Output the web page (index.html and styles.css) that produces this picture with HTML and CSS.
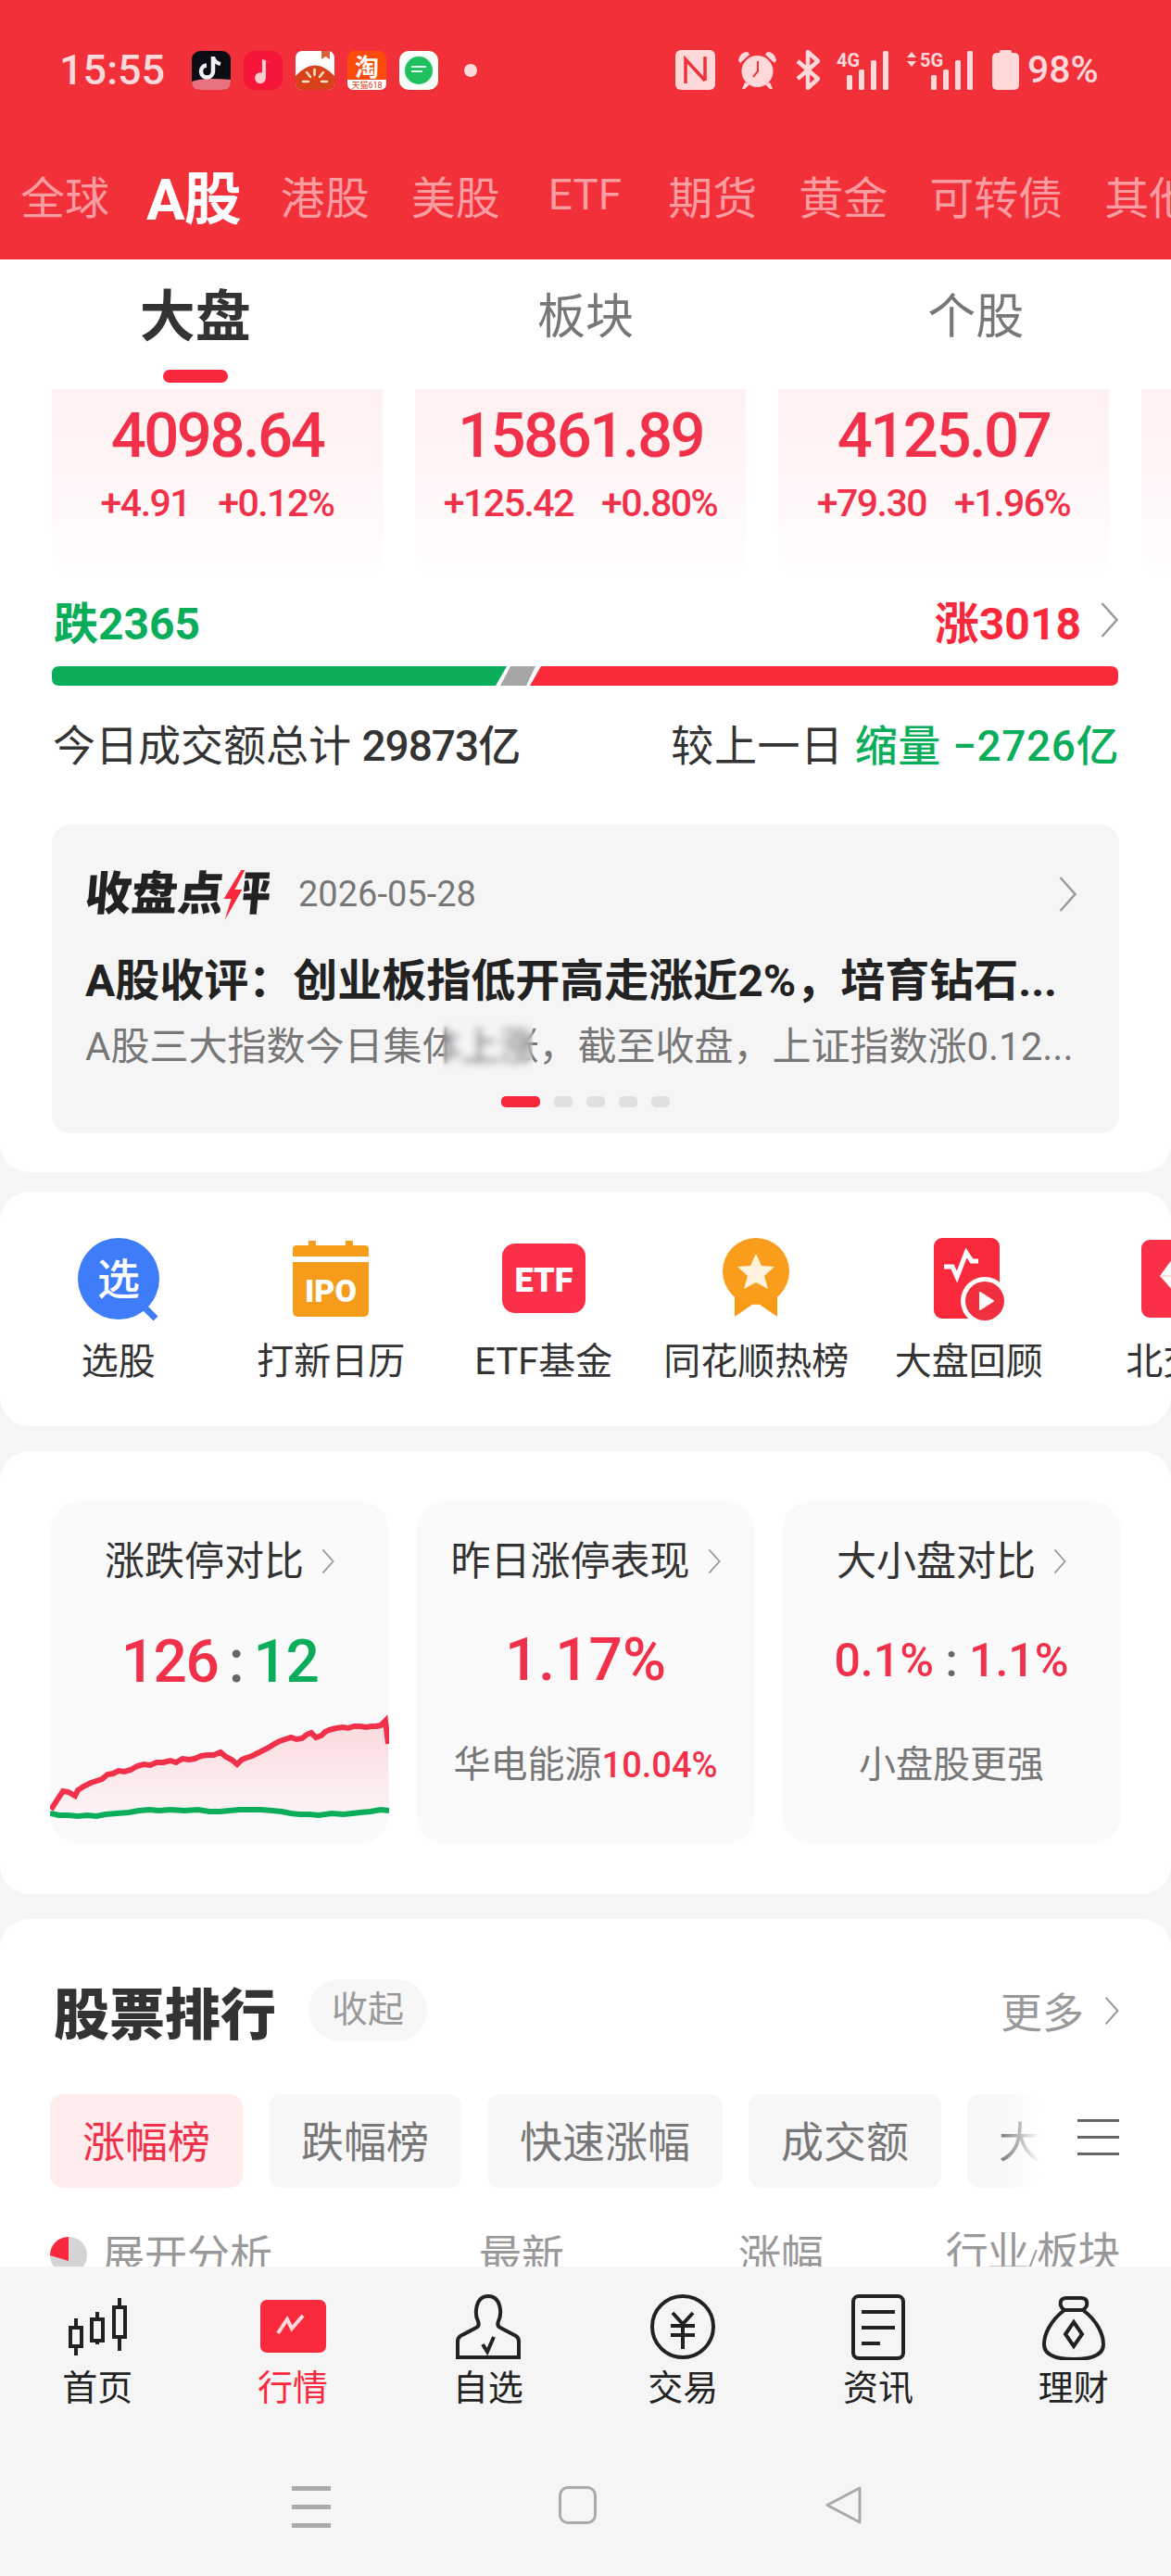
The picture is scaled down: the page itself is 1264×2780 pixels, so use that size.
FILE: index.html
```html
<!DOCTYPE html>
<html>
<head>
	<meta charset="utf-8">
	<title>行情</title>
	<link rel="stylesheet" href="styles.css">
</head>
<body>
	<header class="header">
		<div class="status">
			<span class="time">15:55</span>
			<div class="apps">
				<svg class="app" viewBox="0 0 42 42"><rect width="42" height="42" rx="9" fill="#0c0c14"/><path d="M0 33 Q12 28 42 31 V33 Q42 42 33 42 H9 Q0 42 0 33Z" fill="#e8727f"/><path d="M23 6 V22 A6.500 6.500 0 1 1 16 15.500" fill="none" stroke="#f0f2f4" stroke-width="4.500"/><path d="M23 7 Q25 13 31 14" fill="none" stroke="#f0f2f4" stroke-width="4"/></svg>
				<svg class="app" viewBox="0 0 42 42"><rect width="42" height="42" rx="11" fill="#f5163a"/><path d="M24 10 V29 A6 6 0 1 1 20 23.500 V9 Q26 10 29 14" fill="#ffc9cf"/></svg>
				<svg class="app" viewBox="0 0 42 42"><rect width="42" height="42" rx="7" fill="#fff"/><path d="M0 27 Q21 4 42 27 V35 Q42 42 35 42 H7 Q0 42 0 35Z" fill="#d9411c"/><path d="M28 0 H37 V9 L32.500 6 L28 9Z" fill="#d9623c"/><path d="M20.500 20 V26 M12 23 L16 28 M30 23 L26 28 M8 33 H14 M28 33 H34" stroke="#ffe3c4" stroke-width="2.500" stroke-linecap="round"/></svg>
				<svg class="app" viewBox="0 0 42 42"><rect width="42" height="42" rx="8" fill="#fb4b0a"/><path d="M0 31 H42 V35 Q42 42 35 42 H7 Q0 42 0 35Z" fill="#fff"/><text class="app-big" x="21" y="27">淘</text><text class="app-small" x="21" y="40">天猫618</text></svg>
				<svg class="app" viewBox="0 0 42 42"><rect width="42" height="42" rx="10" fill="#f6fffa"/><circle cx="21" cy="21" r="15" fill="#1fc15f"/><path d="M13 17 H29 M13 22 H25" stroke="#e5fff0" stroke-width="2"/></svg>
			</div>
			<span class="dot"></span>
			<div class="sys">
				<svg class="sys-nfc" viewBox="0 0 43 43"><rect width="43" height="43" rx="6"/><path d="M11 36 V10 L32 33 M32 7 V33" fill="none" stroke="#f1303a" stroke-width="3.500"/></svg>
				<svg class="sys-alarm" viewBox="0 0 45 43"><circle cx="22.500" cy="23" r="17"/><path d="M2 11 Q4 2 12 2 L14 5 L4 14Z M43 11 Q41 2 33 2 L31 5 L41 14Z M9 35 L6 42 H9 L14 37Z M36 35 L39 42 H36 L31 37Z"/><path d="M23 12 V23 L18 29" fill="none" stroke="#f1303a" stroke-width="2"/></svg>
				<svg class="sys-bt" viewBox="0 0 26 43"><path d="M2 12 L24 31 L13 41 V2 L24 12 L2 31" fill="none" stroke="#ffd9da" stroke-width="4.500" stroke-linejoin="round"/></svg>
				<svg class="sys-4g" viewBox="0 0 57 43"><text x="0" y="18">4G</text><rect x="11" y="27" width="6" height="16" rx="1.500"/><rect x="24" y="21" width="6" height="22" rx="1.500"/><rect x="37" y="11" width="6" height="32" rx="1.500"/><rect x="50" y="1" width="6" height="42" rx="1.500"/></svg>
				<svg class="sys-5g" viewBox="0 0 72 43"><path d="M1 8 L6 2 L11 8Z M1 12 L6 18 L11 12Z"/><text x="15" y="18">5G</text><rect x="27" y="27" width="6" height="16" rx="1.500"/><rect x="40" y="21" width="6" height="22" rx="1.500"/><rect x="53" y="11" width="6" height="32" rx="1.500"/><rect x="66" y="1" width="6" height="42" rx="1.500"/></svg>
				<svg class="sys-battery" viewBox="0 0 29 43"><rect x="0" y="3" width="29" height="40" rx="5"/><rect x="8" y="0" width="13" height="5" rx="2"/></svg>
				<span class="battery-text">98%</span>
			</div>
		</div>
		<nav class="market-tabs">
			<span>全球</span>
			<span class="market-on">A股</span>
			<span>港股</span>
			<span>美股</span>
			<span class="market-etf">ETF</span>
			<span>期货</span>
			<span>黄金</span>
			<span>可转债</span>
			<span>其他</span>
		</nav>
	</header>

	<nav class="sub-tabs">
		<div class="sub-tab sub-on">大盘<i class="sub-line"></i></div>
		<div class="sub-tab">板块</div>
		<div class="sub-tab">个股</div>
	</nav>

	<section class="panel overview">
		<div class="index-row">
			<div class="index-card">
				<div class="index-price">4098.64</div>
				<div class="index-change"><span>+4.91</span><span>+0.12%</span></div>
			</div>
			<div class="index-card">
				<div class="index-price">15861.89</div>
				<div class="index-change"><span>+125.42</span><span>+0.80%</span></div>
			</div>
			<div class="index-card">
				<div class="index-price">4125.07</div>
				<div class="index-change"><span>+79.30</span><span>+1.96%</span></div>
			</div>
			<div class="index-card"></div>
		</div>

		<div class="count-row">
			<span class="green">跌2365</span>
			<span class="count-up">涨3018<svg class="chev chev-lg" viewBox="0 0 20 38"><path d="M2 1 L18 19 L2 37"/></svg></span>
		</div>
		<svg class="ratio-bar" viewBox="0 0 1151 21">
			<path d="M8 0 H491 L479 21 H8 Q0 21 0 13 V8 Q0 0 8 0Z" fill="#0aad5a"/>
			<path d="M495 0 H522 L512 21 H484Z" fill="#a6a6a6"/>
			<path d="M528 0 H1143 Q1151 0 1151 8 V13 Q1151 21 1143 21 H516Z" fill="#fa2a3a"/>
		</svg>
		<div class="total-row">
			<span>今日成交额总计 <b class="total-num">29873亿</b></span>
			<span class="total-prev">较上一日 <b class="green">缩量 −2726亿</b></span>
		</div>

		<div class="review">
			<div class="review-head">
				<span class="review-title">收盘点<span class="review-last">评<svg class="review-bolt" viewBox="0 0 24 56"><rect width="24" height="56" fill="#f5f5f5"/><path d="M19 1 L3 32 H11 L6 55 L22 22 H14 L23 1Z" fill="#f9283c"/></svg></span></span>
				<span class="review-date">2026-05-28</span>
				<svg class="chev chev-lg review-chev" viewBox="0 0 20 38"><path d="M2 1 L18 19 L2 37"/></svg>
			</div>
			<div class="review-headline">A股收评：创业板指低开高走涨近2%，培育钻石...</div>
			<div class="review-sub">A股三大指数今日集体上涨，截至收盘，上证指数涨0.12...<i class="smudge"></i></div>
			<div class="pager"><i class="pager-on"></i><i></i><i></i><i></i><i></i></div>
		</div>
	</section>

	<section class="panel shortcuts">
		<div class="shortcut">
			<svg class="shortcut-icon" viewBox="0 0 100 90"><circle cx="50" cy="45" r="44" fill="#3e7cf9"/><path d="M76 74 L90 88" stroke="#3e7cf9" stroke-width="7"/><text class="icon-xuan" x="50" y="62">选</text></svg>
			<span>选股</span>
		</div>
		<div class="shortcut">
			<svg class="shortcut-icon" viewBox="0 0 100 90"><path d="M9 13 Q9 9 13 9 H26 V4 H34 V9 H66 V4 H74 V9 H87 Q91 9 91 13 V21 H9Z M9 27 H91 V80 Q91 86 85 86 H15 Q9 86 9 80Z" fill="#f59c1a"/><text class="icon-ipo" x="50" y="70">IPO</text></svg>
			<span>打新日历</span>
		</div>
		<div class="shortcut">
			<svg class="shortcut-icon" viewBox="0 0 100 90"><rect x="5" y="7" width="90" height="75" rx="14" fill="#fa3048"/><text class="icon-etf" x="50" y="59">ETF</text></svg>
			<span>ETF基金</span>
		</div>
		<div class="shortcut">
			<svg class="shortcut-icon" viewBox="0 0 100 90"><path d="M27 50 H73 V86 L50 70 L27 86Z" fill="#f79a14"/><circle cx="50" cy="37" r="36" fill="#fa9d1c"/><path d="M50 18 L56 31 L70 32 L59 42 L63 56 L50 49 L37 56 L41 42 L30 32 L44 31Z" fill="#fff3dc"/></svg>
			<span>同花顺热榜</span>
		</div>
		<div class="shortcut">
			<svg class="shortcut-icon" viewBox="0 0 100 90"><rect x="12" y="1" width="71" height="87" rx="9" fill="#fa2a3c"/><path d="M23 32 H32 L37 43 L47 17 L53 26 H60" fill="none" stroke="#fff" stroke-width="5"/><circle cx="67" cy="69" r="26" fill="#fff"/><circle cx="67" cy="69" r="21" fill="#f0303f"/><path d="M62 60 L76 69 L62 78Z" fill="#fff" stroke="#fff" stroke-width="2" stroke-linejoin="round"/></svg>
			<span>大盘回顾</span>
		</div>
		<div class="shortcut">
			<svg class="shortcut-icon" viewBox="0 0 100 90"><rect x="7" y="3" width="86" height="84" rx="9" fill="#fa3048"/><path d="M40 24 H60 L73 42 L50 68 L27 42Z" fill="#fff"/><path d="M27 42 H73" stroke="#fbb" stroke-width="1"/></svg>
			<span>北交所</span>
		</div>
	</section>

	<section class="panel compare">
		<div class="compare-card">
			<div class="compare-title">涨跌停对比<svg class="chev chev-sm" viewBox="0 0 20 38"><path d="M2 1 L18 19 L2 37"/></svg></div>
			<div class="compare-value compare-ratio"><span class="red">126</span> <span class="colon">:</span> <span class="green">12</span></div>
			<svg class="compare-chart" viewBox="0 0 366 140">
				<defs>
					<linearGradient id="chartFade" x1="0" y1="0" x2="0" y2="1">
						<stop offset="0" stop-color="#f9d9dc"/>
						<stop offset="1" stop-color="#fdf4f5"/>
					</linearGradient>
				</defs>
				<path fill="url(#chartFade)" d="M1 103 L14 83 L27 88 L39 75 L87 60 L115 52 L156 48 L184 42 L202 53 L224 43 L260 25 L293 23 L309 15 L357 12 L362 7 L365 32 V108 H0Z"/>
				<polyline class="chart-red" points="1,103 8,92 14,83 20,84 27,88 30,82 36,78 44,74 50,72 56,70 62,65 68,64 74,61 80,62 87,60 94,56 101,54 108,55 115,52 122,52 130,50 136,52 143,48 150,49 156,48 163,45 170,44 177,44 184,41 190,46 196,49 202,54 207,49 212,47 218,45 224,42 230,39 236,36 242,32 248,29 254,27 260,25 266,27 272,26 277,22 282,20 287,25 293,23 297,19 301,17 305,16 309,15 316,14 322,15 328,13 335,13 341,14 347,13 352,13 357,12 362,7 365,32"/>
				<polyline class="chart-green" points="0,107 10,109 20,109 30,110 40,109 50,110 60,108 72,107 85,106 96,104 107,103 118,104 130,103 145,104 160,103 172,105 183,105 194,104 204,103 216,103 228,103 240,104 250,105 260,107 269,108 280,108 290,109 304,107 317,108 326,107 335,106 346,105 357,103 366,104"/>
			</svg>
		</div>
		<div class="compare-card">
			<div class="compare-title">昨日涨停表现<svg class="chev chev-sm" viewBox="0 0 20 38"><path d="M2 1 L18 19 L2 37"/></svg></div>
			<div class="compare-value"><span class="red">1.17%</span></div>
			<div class="compare-sub">华电能源<span class="red sub-num">10.04%</span></div>
		</div>
		<div class="compare-card">
			<div class="compare-title">大小盘对比<svg class="chev chev-sm" viewBox="0 0 20 38"><path d="M2 1 L18 19 L2 37"/></svg></div>
			<div class="compare-value compare-small"><span class="red">0.1%</span> <span class="colon">:</span> <span class="red">1.1%</span></div>
			<div class="compare-sub">小盘股更强</div>
		</div>
	</section>

	<section class="panel ranking">
		<div class="rank-head">
			<span class="rank-title">股票排行</span>
			<span class="rank-fold">收起</span>
			<span class="rank-more">更多<svg class="chev chev-more" viewBox="0 0 20 38"><path d="M2 1 L18 19 L2 37"/></svg></span>
		</div>
		<div class="rank-tabs">
			<span class="rank-tab rank-on">涨幅榜</span>
			<span class="rank-tab">跌幅榜</span>
			<span class="rank-tab">快速涨幅</span>
			<span class="rank-tab">成交额</span>
			<span class="rank-tab rank-fade">大</span>
			<span class="rank-menu"><i></i><i></i><i></i></span>
		</div>
		<div class="rank-cols">
			<svg class="rank-pie" viewBox="0 0 40 40"><circle cx="20" cy="20" r="20" fill="#d4d4d4"/><path d="M20 0 A20 20 0 0 0 0 20 L20 26Z" fill="#f9283c"/></svg>
			<span class="col-name">展开分析</span>
			<span class="col-new">最新</span>
			<span class="col-rate">涨幅</span>
			<span class="col-sector">行业<span class="col-slash">/</span>板块</span>
		</div>
	</section>

	<footer class="bottom">
		<nav class="tabbar">
			<div class="tab-item">
				<svg class="tab-icon" viewBox="0 0 80 72"><path d="M17 27 V67 M40 20 V55 M64 5 V62"/><rect x="11" y="37" width="12" height="20" fill="#f5f5f5"/><rect x="34" y="28" width="12" height="23" fill="#f5f5f5"/><rect x="58" y="15" width="12" height="32" fill="#f5f5f5"/></svg>
				<span>首页</span>
			</div>
			<div class="tab-item tab-on">
				<svg class="tab-icon" viewBox="0 0 80 72"><rect class="tab-red" x="5" y="7" width="71" height="57" rx="7"/><path class="tab-zig" d="M24 43 L34 28 L39 38 L51 24"/></svg>
				<span>行情</span>
			</div>
			<div class="tab-item">
				<svg class="tab-icon" viewBox="0 0 80 72"><path d="M7 69 V52 Q7 48 10 46 L27 37 Q31 35 29 30 C25 22 26 3 40 3 C54 3 55 22 51 30 Q49 35 53 37 L70 46 Q73 48 73 52 V69Z"/><path d="M34 55 L39 63 L46 47"/></svg>
				<span>自选</span>
			</div>
			<div class="tab-item">
				<svg class="tab-icon" viewBox="0 0 80 72"><circle cx="40" cy="36" r="33"/><path d="M29 21 L40 33 L51 21 M27 35 H53 M27 45 H53 M40 33 V60"/></svg>
				<span>交易</span>
			</div>
			<div class="tab-item">
				<svg class="tab-icon" viewBox="0 0 80 72"><rect x="13" y="3" width="54" height="67" rx="6"/><path d="M22 20 H58 M22 37 H58 M22 54 H42"/></svg>
				<span>资讯</span>
			</div>
			<div class="tab-item">
				<svg class="tab-icon" viewBox="0 0 80 72"><path d="M30 18 C14 30 8 45 8 55 C8 66 18 71 40 71 C62 71 72 66 72 55 C72 45 66 30 50 18Z"/><path d="M30 18 C24 14 24 5 32 5 H48 C56 5 56 14 50 18Z"/><path d="M40 31 L49 44 L40 57 L31 44Z"/></svg>
				<span>理财</span>
			</div>
		</nav>
		<div class="sysnav">
			<span class="sys-menu"><i></i><i></i><i></i></span>
			<span class="sys-home"></span>
			<svg class="sys-back" viewBox="0 0 41 41"><path d="M38 2 L3 20.500 L38 39Z"/></svg>
		</div>
	</footer>
</body>
</html>
```
FILE: styles.css
```css
* {
	box-sizing: border-box;
}
html, body {
	margin: 0;
	height: 100%;
}
body {
	width: 1264px;
	height: 2780px;
	display: flex;
	flex-direction: column;
	overflow: hidden;
	background: #f5f5f5;
	color: #333;
	font-family: Roboto, "Noto Sans CJK SC", sans-serif;
}
i {
	display: block;
}
svg {
	display: block;
	flex: none;
}
.red {
	color: #f1304a;
}
.green {
	color: #0aad5a;
}

/* header */
.header {
	height: 280px;
	flex: none;
	background: #f1303a;
	overflow: hidden;
}
.status {
	display: flex;
	align-items: center;
	height: 43px;
	margin-top: 54px;
	padding-left: 64px;
	color: #ffd9da;
}
.time {
	width: 143px;
	font-size: 45px;
	font-weight: 500;
}
.apps {
	display: flex;
	gap: 14px;
}
.app {
	width: 42px;
	height: 42px;
}
.app-big {
	font-size: 26px;
	font-weight: 700;
	fill: #fff;
	text-anchor: middle;
}
.app-small {
	font-size: 9px;
	fill: #d9411c;
	text-anchor: middle;
}
.dot {
	width: 14px;
	height: 14px;
	margin-left: 28px;
	border-radius: 50%;
	background: #ffd9da;
}
.sys {
	display: flex;
	align-items: center;
	margin-left: 214px;
	fill: #ffd9da;
}
.sys text {
	font-size: 20px;
	font-weight: 700;
}
.sys-nfc {
	width: 43px;
	height: 43px;
}
.sys-alarm {
	width: 45px;
	height: 43px;
	margin-left: 23px;
}
.sys-bt {
	width: 26px;
	height: 43px;
	margin-left: 19px;
}
.sys-4g {
	width: 57px;
	height: 43px;
	margin-left: 18px;
}
.sys-5g {
	width: 72px;
	height: 43px;
	margin-left: 18px;
}
.sys-battery {
	width: 29px;
	height: 43px;
	margin-left: 21px;
}
.battery-text {
	margin-left: 9px;
	font-size: 41px;
	font-weight: 500;
	line-height: 43px;
}
.market-tabs {
	display: flex;
	align-items: center;
	gap: 45px;
	height: 70px;
	margin-top: 78px;
	padding-left: 22px;
	color: #fb9ca0;
	font-size: 48px;
	white-space: nowrap;
}
.market-on {
	margin: 0 -2px 0 -5px;
	color: #fff;
	font-size: 62px;
	font-weight: 700;
	letter-spacing: -1px;
}
.market-etf {
	margin: 0 5px 0 7px;
	font-size: 46px;
}

/* sub tabs */
.sub-tabs {
	display: flex;
	flex: none;
	height: 140px;
	background: #fff;
}
.sub-tab {
	display: flex;
	flex-direction: column;
	align-items: center;
	flex: 1;
	padding-top: 28px;
	color: #777;
	font-size: 52px;
	line-height: 70px;
}
.sub-on {
	color: #333;
	font-size: 60px;
	font-weight: 700;
}
.sub-line {
	width: 70px;
	height: 14px;
	margin-top: 21px;
	border-radius: 7px;
	background: #f9283c;
}

/* white panels */
.panel {
	flex: none;
	background: #fff;
	border-radius: 32px;
}
.overview {
	height: 845px;
	border-radius: 0 0 32px 32px;
}
.index-row {
	display: flex;
	gap: 35px;
	height: 200px;
	padding-left: 56px;
	overflow: hidden;
}
.index-card {
	flex: none;
	width: 357px;
	padding-top: 20px;
	border-radius: 0 0 24px 24px;
	background: linear-gradient(#fff0f1, #fffdfd);
	text-align: center;
	color: #f1304a;
}
.index-price {
	font-size: 67px;
	font-weight: 500;
	line-height: 60px;
	letter-spacing: -2.500px;
}
.index-change {
	display: flex;
	justify-content: center;
	gap: 30px;
	margin-top: 21px;
	font-size: 41px;
	font-weight: 500;
	line-height: 44px;
	letter-spacing: -1.500px;
}
.count-row {
	display: flex;
	justify-content: space-between;
	align-items: center;
	height: 40px;
	margin-top: 29px;
	padding: 0 56px 0 58px;
	font-size: 48px;
	font-weight: 700;
}
.count-up {
	display: flex;
	align-items: center;
	color: #f9283c;
}
.chev {
	fill: none;
	stroke: #999;
	stroke-width: 2.500;
}
.chev-lg {
	width: 21px;
	height: 38px;
	margin-left: 20px;
}
.ratio-bar {
	width: 1151px;
	height: 21px;
	margin: 30px 0 0 56px;
}
.total-row {
	display: flex;
	justify-content: space-between;
	margin-top: 40px;
	padding: 0 56px 0 57px;
	font-size: 46px;
	line-height: 50px;
	white-space: nowrap;
}
.total-row b {
	font-weight: 500;
}
.total-row .total-num {
	letter-spacing: -1px;
}
.total-prev {
	letter-spacing: 0.600px;
}

/* closing comment card */
.review {
	position: relative;
	height: 333px;
	margin: 60px 56px 0;
	padding: 45px 36px 0;
	border-radius: 20px;
	background: #f5f5f5;
}
.review-head {
	display: flex;
	align-items: center;
	height: 60px;
}
.review-title {
	color: #222;
	font-size: 50px;
	font-weight: 900;
	line-height: 60px;
	transform: skewX(-5deg);
}
.review-last {
	position: relative;
	display: inline-block;
}
.review-bolt {
	position: absolute;
	left: -3px;
	top: 3px;
	width: 24px;
	height: 56px;
}
.review-date {
	margin-left: 30px;
	color: #777;
	font-size: 38px;
}
.review-chev {
	margin-left: auto;
	margin-right: 9px;
}
.review-headline {
	margin-top: 36px;
	color: #222;
	font-size: 48px;
	font-weight: 700;
	line-height: 56px;
	white-space: nowrap;
}
.review-sub {
	position: relative;
	margin-top: 18px;
	color: #777;
	font-size: 42px;
	line-height: 50px;
	white-space: nowrap;
}
.smudge {
	position: absolute;
	left: 386px;
	top: -4px;
	width: 97px;
	height: 54px;
	backdrop-filter: blur(4px);
}
.pager {
	display: flex;
	justify-content: center;
	gap: 15px;
	margin-top: 28px;
}
.pager i {
	width: 20px;
	height: 12px;
	border-radius: 5px;
	background: #e0e0e0;
}
.pager .pager-on {
	width: 42px;
	background: #f9283c;
}

/* shortcuts */
.shortcuts {
	display: flex;
	height: 253px;
	margin-top: 21px;
	padding: 49px 0 0 13px;
	overflow: hidden;
}
.shortcut {
	display: flex;
	flex-direction: column;
	align-items: center;
	flex: none;
	width: 229.500px;
	font-size: 40px;
	line-height: 50px;
	white-space: nowrap;
}
.shortcut-icon {
	width: 100px;
	height: 90px;
	margin-bottom: 20px;
}
.icon-xuan {
	fill: #fff;
	font-size: 46px;
	font-weight: 500;
	text-anchor: middle;
}
.icon-ipo, .icon-etf {
	fill: #fff;
	font-weight: 900;
	text-anchor: middle;
}
.icon-ipo {
	font-size: 34px;
}
.icon-etf {
	font-size: 36px;
}

/* compare cards */
.compare {
	display: flex;
	gap: 29px;
	height: 478px;
	margin-top: 27px;
	padding: 54px 54px 0;
}
.compare-card {
	flex: none;
	width: 366px;
	height: 370px;
	padding-top: 40px;
	border-radius: 32px;
	background: #fafafa;
	text-align: center;
	overflow: hidden;
}
.compare-title {
	display: flex;
	justify-content: center;
	align-items: center;
	font-size: 43px;
	line-height: 50px;
}
.chev-sm {
	width: 14px;
	height: 28px;
	margin-left: 19px;
}
.compare-value {
	height: 80px;
	margin-top: 42px;
	font-size: 64px;
	font-weight: 500;
	line-height: 80px;
}
.compare-ratio {
	line-height: 84px;
	word-spacing: -3px;
	letter-spacing: -1.500px;
}
.compare-small {
	font-size: 50px;
}
.colon {
	color: #666;
}
.compare-sub {
	margin-top: 48px;
	color: #777;
	font-size: 40px;
	line-height: 50px;
}
.sub-num {
	font-size: 38px;
	font-weight: 500;
}
.compare-chart {
	width: 366px;
	height: 140px;
	margin-top: 18px;
}
.chart-red, .chart-green {
	fill: none;
	stroke-width: 6;
}
.chart-red {
	stroke: #f1304a;
}
.chart-green {
	stroke: #0aad5a;
}

/* ranking */
.ranking {
	flex: 1;
	min-height: 0;
	margin-top: 27px;
	padding: 65px 56px 0 54px;
	border-radius: 32px 32px 0 0;
	overflow: hidden;
}
.rank-head {
	display: flex;
	align-items: center;
	height: 67px;
}
.rank-title {
	margin-left: 4px;
	color: #333;
	font-size: 60px;
	font-weight: 900;
}
.rank-fold {
	width: 128px;
	height: 67px;
	margin-left: 35px;
	border-radius: 34px;
	background: #f7f7f7;
	color: #999;
	font-size: 39px;
	line-height: 67px;
	text-align: center;
}
.rank-more {
	display: flex;
	align-items: center;
	margin-left: auto;
	color: #999;
	font-size: 45px;
}
.chev-more {
	width: 16px;
	height: 34px;
	margin-left: 22px;
}
.rank-tabs {
	position: relative;
	display: flex;
	gap: 28px;
	height: 101px;
	margin-top: 57px;
	overflow: hidden;
}
.rank-tab {
	flex: none;
	padding: 3px 35px 0;
	border-radius: 14px;
	background: #f7f7f7;
	color: #777;
	font-size: 46px;
	line-height: 98px;
}
.rank-on {
	background: #ffeced;
	color: #f1304a;
}
.rank-fade {
	width: 78px;
	padding: 3px 0 0 34px;
	overflow: hidden;
	-webkit-mask-image: linear-gradient(90deg, #000 45%, transparent);
	mask-image: linear-gradient(90deg, #000 45%, transparent);
}
.rank-menu {
	position: absolute;
	right: 0;
	top: 27px;
	display: flex;
	flex-direction: column;
	gap: 15px;
	width: 45px;
}
.rank-menu i {
	height: 3px;
	background: #666;
}
.rank-cols {
	display: flex;
	align-items: center;
	height: 50px;
	margin-top: 48px;
	color: #999;
	font-size: 46px;
	line-height: 50px;
}
.rank-pie {
	width: 40px;
	height: 40px;
}
.col-name {
	margin-left: 16px;
}
.col-new {
	margin-left: 223px;
}
.col-rate {
	margin-left: 188px;
}
.col-sector {
	margin-left: auto;
	letter-spacing: -1.500px;
}
.col-slash {
	font-size: 26px;
}

/* bottom bar */
.bottom {
	flex: none;
	height: 334px;
	background: #f5f5f5;
}
.tabbar {
	display: flex;
	padding-top: 29px;
}
.tab-item {
	display: flex;
	flex-direction: column;
	align-items: center;
	flex: 1;
	color: #222;
	font-size: 38px;
	line-height: 44px;
}
.tab-icon {
	width: 80px;
	height: 72px;
	margin-bottom: 8px;
	fill: none;
	stroke: #222;
	stroke-width: 4;
}
.tab-on {
	color: #f9283c;
}
.tab-red {
	fill: #fa2a3c;
	stroke: none;
}
.tab-zig {
	stroke: #ffd9dc;
}
.sysnav {
	display: flex;
	align-items: flex-start;
	gap: 246px;
	margin-top: 84px;
	padding-left: 315px;
}
.sys-menu {
	display: flex;
	flex-direction: column;
	gap: 15px;
	width: 42px;
}
.sys-menu i {
	height: 5px;
	background: #aaa;
}
.sys-home {
	width: 41px;
	height: 41px;
	border: 3px solid #aaa;
	border-radius: 10px;
}
.sys-back {
	width: 41px;
	height: 41px;
	fill: none;
	stroke: #aaa;
	stroke-width: 3;
	stroke-linejoin: round;
}
```
